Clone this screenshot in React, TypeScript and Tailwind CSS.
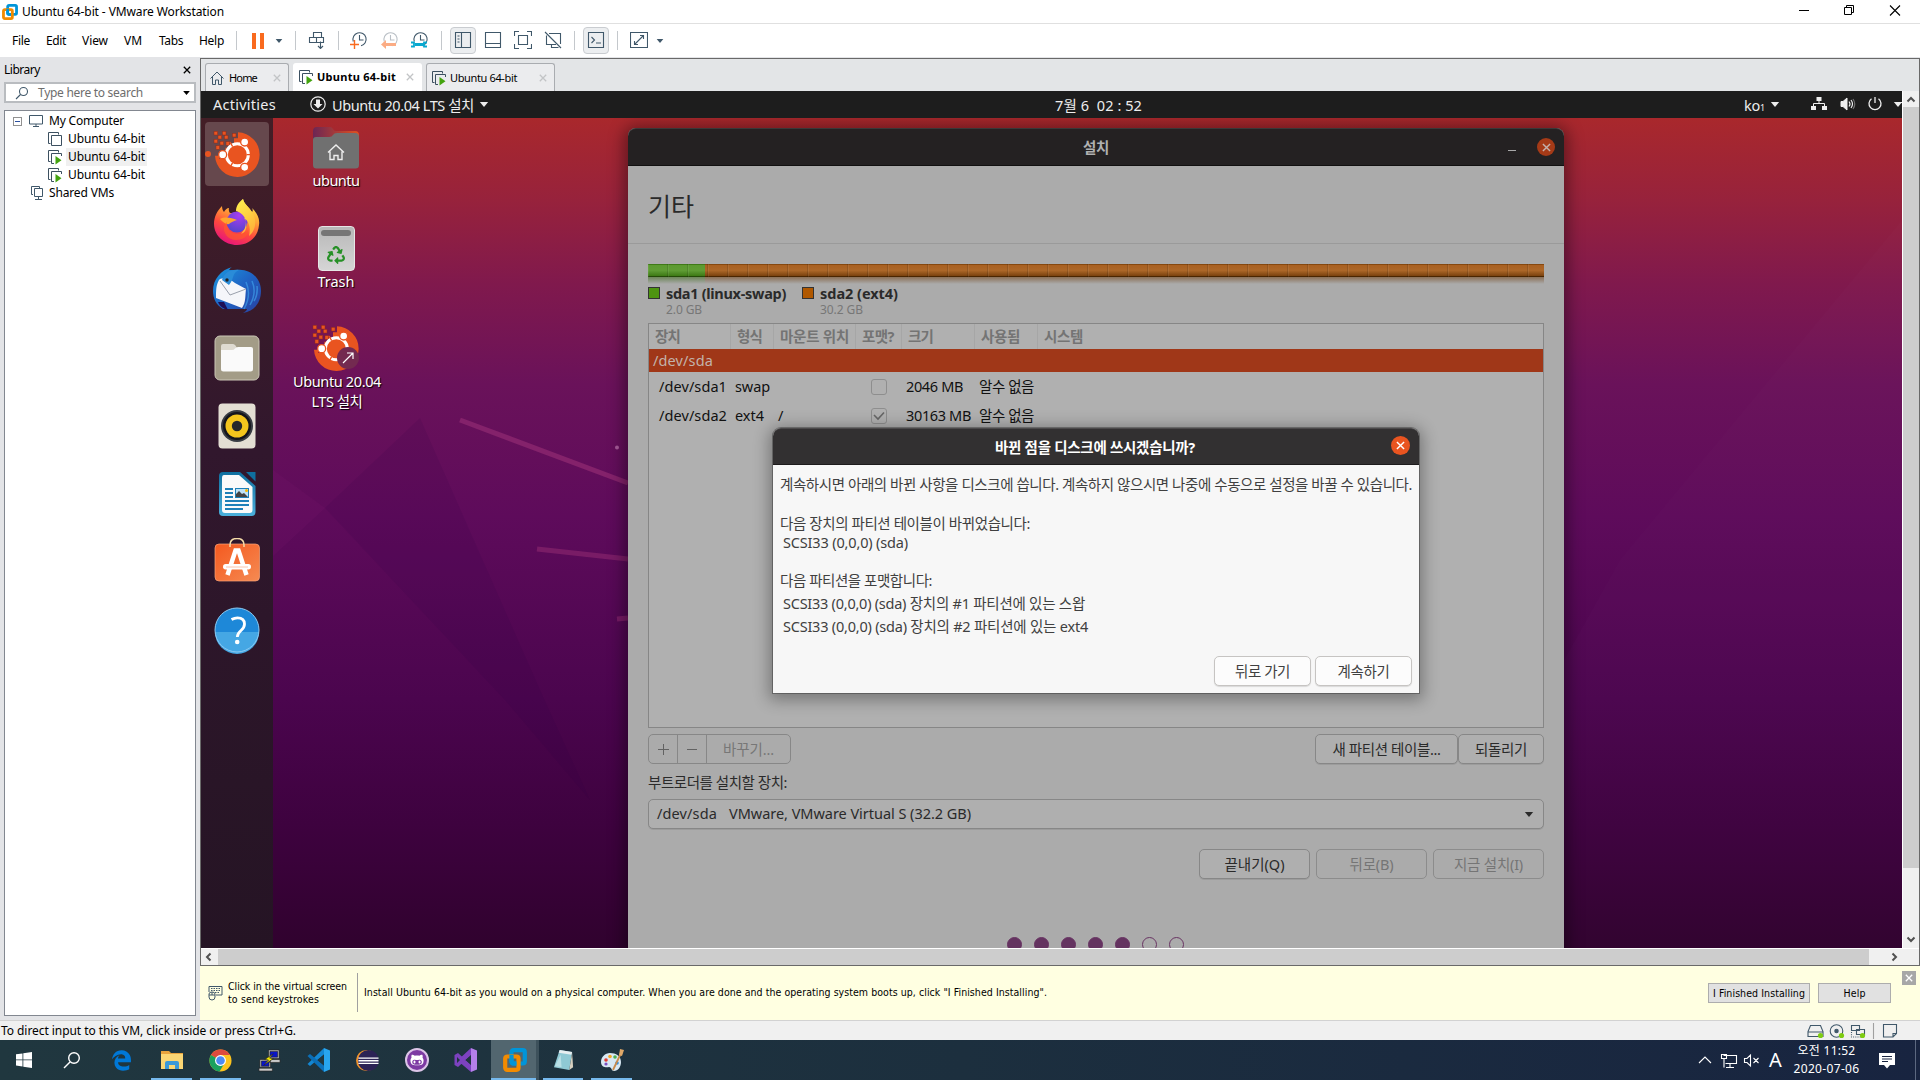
import React, { useLayoutEffect, useRef } from "react";
import { FaRecycle } from "react-icons/fa";
import { FaEdgeLegacy, FaGithubAlt } from "react-icons/fa6";

const UI = "font-['Noto_Sans','Noto_Sans_CJK_KR',sans-serif]";

/* A single line of text, tracked so that it fills the given width. */
function T({ w, className = "", children }: { w: number; className?: string; children: string }) {
  const ref = useRef<HTMLSpanElement>(null);
  useLayoutEffect(() => {
    const el = ref.current;
    if (!el) return;
    el.style.letterSpacing = "0px";
    const natural = el.getBoundingClientRect().width;
    el.style.letterSpacing = `${(w - natural) / children.length}px`;
  }, [w, children]);
  return (
    <span ref={ref} className={`inline-block shrink-0 whitespace-pre ${className}`}>
      {children}
    </span>
  );
}

type IconProps = { className?: string };

function VmwareLogo({ className }: IconProps) {
  return (
    <svg viewBox="0 0 24 24" className={className} fill="none" strokeWidth="4.200">
      <rect x="8.500" y="2.200" width="13.300" height="13.300" rx="2" stroke="#0095d9" />
      <rect x="2.200" y="8.500" width="13.300" height="13.300" rx="2" stroke="#f38b00" />
      <path d="M8.500 7v6.500q0 2 2 2h3" stroke="#0095d9" />
    </svg>
  );
}

function UbuntuInstaller({ className }: IconProps) {
  const bits = [[6, 7], [31, 7], [18, 19], [61, 13], [37, 19], [6, 31], [24, 37], [42, 38], [12, 50]];
  return (
    <svg viewBox="0 0 150 150" className={className}>
      <path d="M78 10A67 67 0 1 1 9 80H22V90H30V74H28V68H40V56H54V44H66V28H78Z" fill="#e95420" />
      {bits.map(([x, y]) => (
        <rect key={`${x}-${y}`} x={x} y={y} width="11" height="11" fill="#e95420" stroke="#8f2a1a" strokeWidth="1.500" />
      ))}
      <circle cx="76" cy="77" r="33" fill="none" stroke="#fff" strokeWidth="9" />
      <path d="M104 77H119M62 53L54 39M62 101L54 115" stroke="#e95420" strokeWidth="4" />
      <g fill="#fff" stroke="#e95420" strokeWidth="4">
        <circle cx="32" cy="77" r="12" />
        <circle cx="98" cy="39" r="12" />
        <circle cx="98" cy="115" r="12" />
      </g>
    </svg>
  );
}

function Firefox({ className }: IconProps) {
  return (
    <svg viewBox="0 0 48 48" className={className}>
      <defs>
        <linearGradient id="ffa" x1="0.75" y1="0" x2="0.3" y2="1">
          <stop offset="0" stopColor="#fff44f" />
          <stop offset=".35" stopColor="#ffa436" />
          <stop offset=".65" stopColor="#ff4a3d" />
          <stop offset="1" stopColor="#e5127d" />
        </linearGradient>
        <radialGradient id="ffb" cx=".6" cy=".2" r=".9">
          <stop offset="0" stopColor="#a83df0" />
          <stop offset="1" stopColor="#4a46c8" />
        </radialGradient>
        <linearGradient id="ffc" x1="0" y1="0" x2="0.4" y2="1">
          <stop offset="0" stopColor="#fff44f" />
          <stop offset="1" stopColor="#ffb43a" />
        </linearGradient>
      </defs>
      <path d="M9 8c0 3 1 5 2 6 1-2 3-4 5-4-.5 2 0 4 1 5h8c0-6 2-11 5-14 1 5 6 8 9 13 1-1 1-2 0-4 5 5 8 10 7 17-1 12-10 20-22 20S1 38 1 26C1 19 4 13 9 8z" fill="url(#ffa)" />
      <circle cx="24" cy="24" r="10.500" fill="url(#ffb)" />
      <path d="M7 21c5-3 12-1 17 1-3 1-6 2-8 4-3 1-6-2-9-5z" fill="#ffa52e" />
      <path d="M23 13c0-5 3-9 7-12 1 5 6 8 9 13 6 9 3 19-3 24 2-8 0-15-5-18 4 6 3 14-3 16 8-8 6-20-5-23z" fill="url(#ffc)" />
      <path d="M14 24c-1 7 4 12 11 12 4 0 8-1 10-4 1 6-5 10-12 10-8 0-13-7-12-14z" fill="#ff5a2b" opacity=".65" />
    </svg>
  );
}

function Thunderbird({ className }: IconProps) {
  return (
    <svg viewBox="0 0 48 48" className={className}>
      <defs>
        <linearGradient id="tb" x1="0" y1="0" x2="1" y2="1">
          <stop offset="0" stopColor="#1b9be0" />
          <stop offset=".5" stopColor="#1f63c4" />
          <stop offset="1" stopColor="#2a3fa0" />
        </linearGradient>
      </defs>
      <path d="M19 1c-2 1-2 2-3 3h7c14-2 25 8 25 21 0 11-6 20-18 22 3-2 4-3 4-4H10C3 39 0 32 0 25 0 13 8 4 19 1z" fill="url(#tb)" />
      <path d="M5 36c2 5 6 7 10 8l-4-8z" fill="#1d0f56" />
      <path d="M6 14l1-1c4-2 10 0 15 4l11 6c-1 8 0 13-4 19L3 32c0-7 0-13 3-18z" fill="#f5f6fa" />
      <path d="M7 15L17 29 33 23" fill="none" stroke="#9aa0ac" strokeWidth="1" />
      <path d="M9 14C11 7 17 3 26 4 18 8 22 12 16 19z" fill="#2a8cd8" />
      <path d="M33 16c4 9 3 18-2 27M39 15c4 9 2 17-2 24M44 20q1 9-3 15" stroke="#3d9de8" strokeWidth="1.500" fill="none" opacity=".7" />
      <circle cx="14" cy="14" r="1.700" fill="#222" />
    </svg>
  );
}

function FilesIcon({ className }: IconProps) {
  return (
    <svg viewBox="0 0 48 48" className={className}>
      <rect x="2" y="2" width="44" height="44" rx="5" fill="#a39c87" stroke="#cbc6b6" strokeWidth="1" />
      <path d="M8 17V12q0-2 2-2h10q1.500 0 2.500 1.500L24 14h14q2 0 2 2v4z" fill="#dedad0" />
      <path d="M8 16h11q2 0 3-1.500t3-1.500h13q2 0 2 2v20q0 2.500-2.500 2.500h-27Q8 37.500 8 35z" fill="#fafafa" />
    </svg>
  );
}

function RhythmboxIcon({ className }: IconProps) {
  return (
    <svg viewBox="0 0 48 48" className={className}>
      <rect x="5.500" y="1.500" width="37" height="45" rx="4" fill="#e3ded3" />
      <circle cx="24" cy="24" r="16" fill="#383c43" />
      <circle cx="24" cy="24" r="14" fill="#14151c" />
      <circle cx="24" cy="24" r="11.500" fill="#f3c51d" />
      <circle cx="24" cy="24" r="5.200" fill="#23262a" />
    </svg>
  );
}

function WriterIcon({ className }: IconProps) {
  return (
    <svg viewBox="0 0 48 48" className={className}>
      <defs>
        <linearGradient id="wr" x1="0" y1="0" x2="0" y2="1">
          <stop offset="0" stopColor="#0f6f9f" />
          <stop offset="1" stopColor="#4bb0dc" />
        </linearGradient>
      </defs>
      <path d="M10 2h17l15.500 14v26q0 4-4 4H10q-4 0-4-4V6q0-4 4-4z" fill="url(#wr)" />
      <path d="M33 2h9.500v9.500z" fill="#0f6f9f" />
      <path d="M11 5h15l13.500 12v23q0 3-3 3h-24.500q-3 0-3-3V8q0-3 2-3z" fill="#fafafa" />
      <path d="M12 19h8M12 23h8M12 27h8M12 31h24M12 35h24M12 39h18" stroke="#1e80b8" strokeWidth="2" />
      <rect x="22" y="18" width="14" height="10" fill="#1e80b8" />
      <rect x="23" y="19" width="12" height="8" fill="#bfe3f7" />
      <path d="M23 27v-3l3-3 3 3 2-1 4 4z" fill="#444" />
      <circle cx="33.500" cy="20.500" r="1.500" fill="#fbb800" />
    </svg>
  );
}

function SoftwareIcon({ className }: IconProps) {
  return (
    <svg viewBox="0 2 48 48" className={className}>
      <defs>
        <linearGradient id="sw" x1="0" y1="0" x2="1" y2="1">
          <stop offset="0" stopColor="#f4591f" />
          <stop offset="1" stopColor="#f58a52" />
        </linearGradient>
      </defs>
      <rect x="2" y="8" width="44.500" height="37" rx="4" fill="url(#sw)" stroke="#f9a37a" strokeWidth=".7" />
      <path d="M17 11V9q0-6.500 7-6.500T31 9v2" fill="none" stroke="#f5dca8" strokeWidth="1.500" />
      <path d="M14.500 39L22.500 14.500h3L33.500 39" fill="none" stroke="#fff" strokeWidth="4.500" />
      <rect x="10" y="28" width="28" height="5.500" rx="2.700" fill="#fff" />
      <path d="M13 31h22" stroke="#f9b79b" strokeWidth=".8" />
    </svg>
  );
}

function HelpIcon({ className }: IconProps) {
  return (
    <svg viewBox="0 0 48 48" className={className}>
      <circle cx="24" cy="24" r="22" fill="#1e88d8" />
      <path d="M2 26a22 22 0 0 0 44 0z" fill="#45a7e4" />
      <circle cx="24" cy="24" r="22" fill="none" stroke="#8ccaf2" strokeWidth="1" />
      <path d="M18.500 13.500q3-1.700 6-1.700 7 0 7 6.200 0 3.500-3.500 6.500T24.300 31" fill="none" stroke="#fff" strokeWidth="2.800" />
      <circle cx="24.200" cy="36" r="2.300" fill="#fff" />
    </svg>
  );
}

function VmIcon({ running }: { running?: boolean }) {
  return (
    <svg viewBox="0 0 16 16" className="h-4 w-4 shrink-0" fill="none" stroke="#3c5060">
      <path d="M3.500 12.500h-2v-11h10v2" />
      <path d={running ? "M7 14.500H4.500v-10h10V7" : "M4.500 4.500h10v10h-10z"} />
      {running && <path d="M8.500 7v8.500l6-4.200z" fill="#43a30f" stroke="none" />}
    </svg>
  );
}

function Cross({ className }: IconProps) {
  return (
    <svg viewBox="0 0 10 10" className={className} stroke="currentColor" strokeWidth="1.600">
      <path d="M1 1l8 8M9 1l-8 8" />
    </svg>
  );
}

function Caret({ className }: IconProps) {
  return (
    <svg viewBox="0 0 10 6" className={className} fill="currentColor">
      <path d="M0 0h10L5 6z" />
    </svg>
  );
}

/* ---------- VMware window chrome ---------- */

function TitleBar() {
  return (
    <div className="flex h-6 shrink-0 items-center border-b border-[#e0e0e0] bg-white pl-0.5">
      <VmwareLogo className="h-4 w-4" />
      <T w={202} className="ml-1 text-[12px] leading-5 text-black">Ubuntu 64-bit - VMware Workstation</T>
      <svg viewBox="0 0 120 16" className="mr-3.5 ml-auto h-4 w-[120px] -translate-y-0.5" fill="none" stroke="#000">
        <path d="M13 8.500h10" />
        <path d="M58.500 5.500h7v7h-7zM60.500 5.500V3.500h7v7H66" />
        <path d="M104 3.500l10 10M114 3.500l-10 10" strokeWidth="1.100" />
      </svg>
    </div>
  );
}

function Sep() {
  return <div className="h-[19px] w-px shrink-0 bg-[#c4c8cc]" />;
}

function ToolIcon({ children, active }: { children: React.ReactNode; active?: boolean }) {
  return (
    <div className={`flex h-[27px] w-[26px] shrink-0 items-start justify-center rounded-[4px] border pt-[3px] ${active ? "border-[#c9ccd0] bg-[#eceef0]" : "border-transparent"}`}>
      <svg viewBox="0 0 18 18" className="h-[18px] w-[18px] shrink-0" fill="none" stroke="#40586a" strokeWidth="1.100">
        {children}
      </svg>
    </div>
  );
}

function Clock({ faded }: { faded?: boolean }) {
  return (
    <g stroke={faded ? "#b9bfc5" : "#40586a"}>
      <path d="M3.300 10.500A6.600 6.600 0 1 1 11 14.800" />
      <path d="M9.500 4v5h4" />
    </g>
  );
}

function MenuBar() {
  const menus: [string, number, string][] = [
    ["File", 18, "mr-4"], ["Edit", 20, "mr-4"], ["View", 26, "mr-4"],
    ["VM", 18, "mr-[17px]"], ["Tabs", 24, "mr-4"], ["Help", 25, "mr-3"],
  ];
  return (
    <div className="flex h-[33px] shrink-0 items-center bg-white pl-3 text-black">
      {menus.map(([label, w, gap]) => (
        <T key={label} w={w} className={`text-[12px] leading-5 ${gap}`}>{label}</T>
      ))}
      <div className="flex items-center">
        <Sep />
        <div className="ml-[15px] flex gap-1">
          <div className="h-4 w-1 bg-[#f96a1e]" />
          <div className="h-4 w-1 bg-[#f96a1e]" />
        </div>
        <Caret className="mr-3 ml-[11px] h-1 w-2 text-[#40586a]" />
        <Sep />
        <div className="mx-2">
          <ToolIcon>
            <path d="M5.500 1.500h8v5h-8zM1.500 6.500h7v5h-7zM8.500 6.500h7v5h-7zM12.500 10.500v7M10 15l2.500 2.500L15 15" />
          </ToolIcon>
        </div>
        <Sep />
        <div className="mr-2 ml-[7px] flex gap-1">
          <ToolIcon>
            <Clock />
            <path d="M0 13.500h9M4.500 9v9" stroke="#f96a1e" strokeWidth="1.400" />
          </ToolIcon>
          <div className="ml-px">
            <ToolIcon>
              <Clock faded />
              <path d="M4 13.500h11" stroke="#fbac84" strokeWidth="3" />
              <path d="M0 13.500l5-4.500v9z" fill="#fbac84" stroke="none" />
            </ToolIcon>
          </div>
          <ToolIcon>
            <Clock />
            <path d="M4 13.500h9" stroke="#09a8cf" strokeWidth="3" />
            <path d="M0 11.500h3v4H0M16 11.500h-3v4h3" stroke="#09a8cf" strokeWidth="1.800" />
          </ToolIcon>
        </div>
        <Sep />
        <div className="mx-2 flex gap-1">
          <ToolIcon active><path d="M1.500 1.500h15v15h-15zM7.500 2v14M3.500 5h2M3.500 8h2M3.500 11h2" /></ToolIcon>
          <ToolIcon><path d="M1.500 1.500h15v15h-15zM2 12.500h14" /></ToolIcon>
          <ToolIcon><path d="M.5 5V.5h4.500M13 .5h4.500V5M17.500 13v4.500H13M5 17.500H.5V13M4.500 4.500h9v9h-9z" /></ToolIcon>
          <ToolIcon><path d="M1 1l16 16M5 2.500h11.500V13M2.500 4.500v9H12M7.500 13v3.500h7" /></ToolIcon>
        </div>
        <Sep />
        <div className="mx-2">
          <ToolIcon active><path d="M1.500 1.500h15v15h-15zM4.500 6L7.500 9l-3 3M9 12h5" /></ToolIcon>
        </div>
        <Sep />
        <div className="ml-2">
          <ToolIcon><path d="M.5 1.500h17v15H.5zM4.500 13.500l9-9M10 4.500h3.500V8M4.500 10v3.500H8" /></ToolIcon>
        </div>
        <Caret className="ml-1 h-1 w-2 text-[#40586a]" />
      </div>
    </div>
  );
}

function Library() {
  return (
    <div className="flex w-[200px] shrink-0 flex-col bg-[#e3e4e7] pr-1 pl-1 text-black">
      <div className="flex h-[25px] items-center justify-between pr-[5px]">
        <T w={36} className="text-[12px] leading-5">Library</T>
        <Cross className="h-2 w-2" />
      </div>
      <div className="flex h-[21px] w-48 items-center border-2 border-[#b9bcc0] bg-white pr-1">
        <svg viewBox="0 0 14 14" className="ml-[9px] h-3.5 w-3.5" fill="none" stroke="#40586a" strokeWidth="1.100">
          <circle cx="8.500" cy="5.500" r="4" />
          <path d="M5.500 8.500L1 13" />
        </svg>
        <T w={105} className="ml-[9px] text-[12px] leading-4 text-[#6d6d6d]">Type here to search</T>
        <Caret className="ml-auto h-1 w-[7px]" />
      </div>
      <div className="mt-[7px] mb-1 w-48 flex-1 border border-[#828790] bg-white pt-px">
        <div className="flex h-[18px] items-center pl-2">
          <div className="flex h-[9px] w-[9px] items-center justify-center border border-[#919191] bg-white">
            <div className="h-px w-[5px] bg-[#2c50a0]" />
          </div>
          <svg viewBox="0 0 15 14" className="ml-[7px] h-3.5 w-[15px]" fill="none" stroke="#40586a">
            <path d="M.5 1.500h13v8.500H.5zM7 10v2.500M4 12.500h6" />
          </svg>
          <T w={75} className="ml-[5px] text-[12px] leading-[18px]">My Computer</T>
        </div>
        {[0, 1, 2].map((i) => (
          <div key={i} className="flex h-[18px] items-center pl-[42px]">
            <VmIcon running={i > 0} />
            <div className={`ml-[3px] flex h-[18px] items-center pr-0.5 pl-0.5 ${i === 1 ? "bg-[#f0f0f0]" : ""}`}>
              <T w={77} className="text-[12px] leading-[18px]">Ubuntu 64-bit</T>
            </div>
          </div>
        ))}
        <div className="flex h-[18px] items-center pl-[25px]">
          <svg viewBox="0 0 14 14" className="h-3.5 w-3.5" fill="none" stroke="#40586a">
            <path d="M3 8.500H1.500v-8h8V2M4.500 2.500h8v8h-8zM8.500 11v2.500M5 13.500h7" />
          </svg>
          <T w={65} className="ml-[5px] text-[12px] leading-[18px]">Shared VMs</T>
        </div>
      </div>
    </div>
  );
}

function TabStrip() {
  return (
    <div className="flex h-8 shrink-0 items-end bg-[#e3e5e7] pl-1 text-black">
      <div className="flex h-7 w-[84px] items-center rounded-t-[3px] border border-b-0 border-[#a9acb0] bg-[#ebecee] pl-1">
        <svg viewBox="0 0 14 14" className="h-3.5 w-3.5" fill="none" stroke="#40586a">
          <path d="M.5 7.500L7 1l6.500 6.500M2.500 6v7.500h3V9h3v4.500h3V6" />
        </svg>
        <T w={28} className="ml-[5px] text-[11px] leading-4">Home</T>
        <Cross className="ml-4 h-2 w-2 text-[#c2c4c6]" />
      </div>
      <div className="ml-1 flex h-7 w-[129px] items-center rounded-t-[3px] bg-white pl-[5px]">
        <VmIcon running />
        <T w={79} className="ml-[3px] text-[11px] leading-4 font-bold">Ubuntu 64-bit</T>
        <Cross className="ml-[10px] h-2 w-2 text-[#c2c4c6]" />
      </div>
      <div className="ml-1 flex h-7 w-[129px] items-center rounded-t-[3px] border border-b-0 border-[#a9acb0] bg-[#ebecee] pl-1">
        <VmIcon running />
        <T w={67} className="ml-[3px] text-[11px] leading-4">Ubuntu 64-bit</T>
        <Cross className="ml-[22px] h-2 w-2 text-[#c2c4c6]" />
      </div>
    </div>
  );
}

/* ---------- Guest desktop ---------- */

function GuestTopBar() {
  return (
    <div className="relative flex h-[27px] shrink-0 items-center bg-[#1d1d1d] pl-3 text-[14.5px] leading-5 text-[#eeeeee]">
      <T w={63} className="-translate-y-px">Activities</T>
      <svg viewBox="0 0 16 16" className="ml-[34px] h-4 w-4 -translate-y-px">
        <circle cx="8" cy="8" r="7.200" fill="none" stroke="#eee" strokeWidth="1.200" />
        <path d="M6 3.500h4V8h2.500L8 12.500 3.500 8H6z" fill="#eee" />
      </svg>
      <T w={142} className="ml-1.5">Ubuntu 20.04 LTS 설치</T>
      <Caret className="ml-[5px] h-[5px] w-[10px]" />
      <div className="absolute top-1 left-[854px]">
        <T w={87}>7월 6  02 : 52</T>
      </div>
      <div className="ml-auto flex h-5 w-[158px] items-center overflow-hidden">
        <T w={16}>ko</T>
        <span className="w-[5px] translate-y-[3px] text-[9px] leading-3">1</span>
        <Caret className="ml-[5px] h-[5px] w-[10px] shrink-0" />
        <svg viewBox="0 0 16 16" className="ml-[31px] h-4 w-4 shrink-0 -translate-y-px" fill="#eee">
          <path d="M5.500 1h5v4h-5zM0 10h5v4H0zM11 10h5v4h-5z" />
          <path d="M8 5v3M2.500 10V7.500h11V10" stroke="#eee" fill="none" />
        </svg>
        <svg viewBox="0 0 16 16" className="ml-[13px] h-4 w-4 shrink-0 -translate-y-px" fill="none" stroke="#eee">
          <path d="M1 5.500h2L7 2v12l-4-3.500H1z" fill="#eee" />
          <path d="M9 5.500q2 2.500 0 5M11 4q3 4 0 8" strokeWidth="1.200" />
          <path d="M13 3q3.500 5 0 10" strokeWidth="1.200" opacity=".4" />
        </svg>
        <svg viewBox="0 0 16 16" className="ml-[11px] h-4 w-4 shrink-0 -translate-y-px" fill="none" stroke="#eee" strokeWidth="1.300">
          <path d="M8 1v6M4.500 2.800a6 6 0 1 0 7 0" />
        </svg>
        <Caret className="ml-[10px] h-[5px] w-[10px] shrink-0" />
      </div>
    </div>
  );
}

function Wallpaper() {
  return (
    <svg viewBox="201 118 1701 830" className="absolute inset-0 h-full w-full">
      <defs>
        <linearGradient id="wp" x1="0" y1="118" x2="0" y2="948" gradientUnits="userSpaceOnUse">
          <stop offset="0" stopColor="#a9282c" />
          <stop offset=".1" stopColor="#97223c" />
          <stop offset=".2" stopColor="#80194d" />
          <stop offset=".32" stopColor="#6a125a" />
          <stop offset=".48" stopColor="#5e0b5b" />
          <stop offset=".7" stopColor="#4b054e" />
          <stop offset=".85" stopColor="#3e023f" />
          <stop offset="1" stopColor="#30022e" />
        </linearGradient>
      </defs>
      <rect x="201" y="118" width="1701" height="830" fill="url(#wp)" />
      <path d="M420 418L325 508 505 700 590 800 540 690z" fill="#2c0040" opacity=".1" />
      <path d="M273 470L325 508 273 556z" fill="#ff60c0" opacity=".03" />
      <path d="M1902 220L1620 560 1564 660V950H1902z" fill="#fff" opacity=".012" />
      <g stroke="#84226b" strokeWidth="5">
        <path d="M460 420L628 483" />
        <path d="M537 549L628 559" opacity=".75" />
        <path d="M617 619L628 618" opacity=".75" />
      </g>
      <circle cx="617" cy="447.500" r="2" fill="#a65a98" />
    </svg>
  );
}

function Dock() {
  const icons = [Firefox, Thunderbird, FilesIcon, RhythmboxIcon, WriterIcon, SoftwareIcon, HelpIcon];
  return (
    <div className="absolute top-0 bottom-0 left-0 flex w-[72px] flex-col items-center bg-linear-to-b from-[#431e26] via-[#31172d] via-40% to-[#251424] pt-1">
      <div className="relative mb-0.5 flex h-16 w-16 shrink-0 items-center justify-center rounded-[4px] bg-[#66484d]">
        <div className="absolute left-0 h-1.5 w-1.5 rounded-full bg-[#e95420]" />
        <UbuntuInstaller className="h-[50px] w-[50px]" />
      </div>
      {icons.map((Icon, i) => (
        <div key={i} className="flex h-[68px] w-16 shrink-0 items-center justify-center">
          <Icon className="h-12 w-12" />
        </div>
      ))}
    </div>
  );
}

function DesktopLabel({ w, children }: { w: number; children: string }) {
  return <T w={w} className="text-[14.5px] leading-5 text-white [text-shadow:1px_1px_1px_#000]">{children}</T>;
}

function DesktopIcons() {
  return (
    <>
      <div className="absolute top-[8px] left-[75px] flex w-[120px] flex-col items-center">
        <svg viewBox="0 0 48 44" className="h-11 w-12">
          <defs>
            <linearGradient id="fb"><stop offset="0" stopColor="#6c2654" /><stop offset="1" stopColor="#e0501f" /></linearGradient>
          </defs>
          <path d="M1 12V5q0-4 4-4h13q2 0 3 2t3 2h19q4 0 4 4v8H1z" fill="url(#fb)" />
          <path d="M1 14q0-3 3-3h13q3 0 4-2t4-2h18q4 0 4 4v28q0 3.500-3.500 3.500h-39Q1 42.500 1 39z" fill="#707070" />
          <path d="M16 26.500L24 19l8 7.500M18 25.500v8h4v-4h4v4h4v-8" fill="none" stroke="#eee" strokeWidth="1.400" />
        </svg>
        <div className="-mt-0.5"><DesktopLabel w={47}>ubuntu</DesktopLabel></div>
      </div>
      <div className="absolute top-[108px] left-[75px] flex w-[120px] flex-col items-center">
        <div className="flex h-[45px] w-[37px] flex-col items-center rounded-[4px] border border-[#e6e6e6] bg-linear-to-b from-[#b8b8b8] to-[#d5d5d5] pt-[3px]">
          <div className="h-1.5 w-[30px] rounded-[3px] bg-[#767676]" />
          <FaRecycle className="mt-2.5 h-[18px] w-[18px] text-[#269026]" />
        </div>
        <div className="-mt-0.5"><DesktopLabel w={37}>Trash</DesktopLabel></div>
      </div>
      <div className="absolute top-[205px] left-[75px] flex w-[120px] flex-col items-center">
        <div className="relative">
          <UbuntuInstaller className="h-[50px] w-[50px]" />
          <svg viewBox="0 0 22 22" className="absolute right-0.5 bottom-1 h-[22px] w-[22px]">
            <circle cx="11" cy="11" r="11" fill="#732a50" />
            <path d="M6 16L16 6M10 6h6v6" fill="none" stroke="#fff" strokeWidth="1.200" />
          </svg>
        </div>
        <div className="-mt-0.5 ml-0.5 flex flex-col items-center">
          <DesktopLabel w={88}>Ubuntu 20.04</DesktopLabel>
          <DesktopLabel w={51}>LTS 설치</DesktopLabel>
        </div>
      </div>
    </>
  );
}

function GtkButton({ w, tw, label, className = "" }: { w: string; tw: number; label: string; className?: string }) {
  return (
    <div className={`flex h-[30px] items-center justify-center rounded-[5px] border text-[14.5px] ${w} ${className}`}>
      <T w={tw} className="leading-6">{label}</T>
    </div>
  );
}

const COLS: [string, string, number][] = [
  ["장치", "w-[82px] pl-1.5", 25],
  ["형식", "w-[43px] pl-1.5", 25],
  ["마운트 위치", "w-[82px] pl-1.5", 69],
  ["포맷?", "w-[46px] pl-1.5", 32],
  ["크기", "w-[73px] pl-1.5", 25],
  ["사용됨", "w-[63px] pl-1.5", 39],
];

function PartRow({ dev, fs, fsw, mount, checked, size, sizew }: { dev: string; fs: string; fsw: number; mount?: string; checked?: boolean; size: string; sizew: number }) {
  return (
    <div className="flex h-[29px] items-center text-[14.5px] leading-6 text-[#111]">
      <div className="w-[86px] -translate-y-px pl-[10px]"><T w={68}>{dev}</T></div>
      <div className="w-[43px] -translate-y-px"><T w={fsw}>{fs}</T></div>
      <div className="w-[93px] -translate-y-px">{mount && <T w={6}>{mount}</T>}</div>
      <div className="mr-[19px] flex h-4 w-4 items-center justify-center rounded-[3px] border border-[#8e8e8e]">
        {checked && (
          <svg viewBox="0 0 12 12" className="h-3 w-3" fill="none" stroke="#666" strokeWidth="1.600">
            <path d="M1 5l4 4 6-6.500" />
          </svg>
        )}
      </div>
      <div className="w-[73px] -translate-y-px"><T w={sizew}>{size}</T></div>
      <T w={55} className="-translate-y-px">알수 없음</T>
    </div>
  );
}

function InstallerWindow() {
  return (
    <div className="absolute top-[10px] left-[427px] flex h-[900px] w-[936px] flex-col rounded-t-lg bg-[#ababab] text-[#2a2a2a] shadow-[0_2px_16px_4px_rgba(0,0,0,0.4)]">
      <div className="relative flex h-[38px] shrink-0 items-center justify-center rounded-t-lg border-t border-b border-t-[#3a3838] border-b-[#121111] bg-[#242122]">
        <T w={26} className="text-[14.5px] leading-6 font-bold text-[#b0b0b0]">설치</T>
        <div className="absolute right-12 bottom-[14px] h-px w-2 bg-[#a8a8a8]" />
        <div className="absolute top-[9px] right-[9px] flex h-[18px] w-[18px] items-center justify-center rounded-full bg-[#a53a17]">
          <Cross className="h-[9px] w-[9px] text-[#c4b2ac]" />
        </div>
      </div>
      <div className="flex h-[78px] shrink-0 items-center border-b border-[#9a9a9a] pt-0.5 pl-5">
        <T w={46} className="text-[25px] leading-9">기타</T>
      </div>
      <div className="flex flex-1 flex-col px-5">
        <div className="relative mt-5 flex h-[13px] shrink-0">
          <div className="h-full w-[57px] border-t border-b border-t-[#3f7a18] border-b-[#244a08] bg-linear-to-b from-[#5c9a30] via-[#5f9c34] to-[#3d7a14]" />
          <div className="h-full flex-1 border-t border-b border-t-[#86480f] border-b-[#4a2500] bg-linear-to-b from-[#a96021] via-[#ac6728] to-[#7a420e]" />
          <div className="absolute inset-0 bg-[repeating-linear-gradient(90deg,rgba(255,255,255,0.07)_0_1px,transparent_1px_19px,rgba(0,0,0,0.13)_19px_20px)]" />
        </div>
        <div className="flex h-[7px] shrink-0">
          <div className="w-[57px] bg-linear-to-b from-[#6c8558] to-transparent" />
          <div className="flex-1 bg-linear-to-b from-[#8a6f56] to-transparent" />
        </div>
        <div className="mt-[3px] flex h-[36px] shrink-0">
          <div className="h-3 w-3 border border-[#333] bg-[#4e9411]" />
          <div className="ml-1.5 flex w-[136px] flex-col">
            <T w={120} className="-mt-[3px] h-[18px] w-fit text-[14.5px] leading-[18px] font-bold">sda1 (linux-swap)</T>
            <T w={36} className="w-fit text-[12px] leading-4 text-[#777]">2.0 GB</T>
          </div>
          <div className="h-3 w-3 border border-[#333] bg-[#b05800]" />
          <div className="ml-1.5 flex flex-col">
            <T w={78} className="-mt-[3px] h-[18px] w-fit text-[14.5px] leading-[18px] font-bold">sda2 (ext4)</T>
            <T w={43} className="w-fit text-[12px] leading-4 text-[#777]">30.2 GB</T>
          </div>
        </div>
        <div className="h-[405px] shrink-0 border border-[#868686] bg-[#b0b0b0]">
          <div className="flex h-[25px] items-center text-[14.5px] leading-6 font-bold text-[#747474]">
            {COLS.map(([label, cls, w]) => (
              <div key={label} className={`flex h-full items-center border-r border-[#a6a6a6] pb-0.5 ${cls}`}>
                <T w={w}>{label}</T>
              </div>
            ))}
            <T w={39} className="ml-1.5 -translate-y-px">시스템</T>
          </div>
          <div className="flex h-[23px] items-center bg-[#a03718] pb-0.5 pl-1 text-[14.5px] leading-6 text-[#c3b3ab]">
            <T w={60}>/dev/sda</T>
          </div>
          <PartRow dev="/dev/sda1" fs="swap" fsw={35} size="2046 MB" sizew={57} />
          <PartRow dev="/dev/sda2" fs="ext4" fsw={29} mount="/" checked size="30163 MB" sizew={65} />
        </div>
        <div className="mt-1.5 flex shrink-0">
          <div className="flex h-[30px] w-[143px] items-center rounded-[5px] border border-[#878787] text-[#777]">
            <svg viewBox="0 0 58 28" className="h-7 w-[58px]" fill="none" stroke="#626262">
              <path d="M9 14.500h11M14.500 9v11M38 14.500h10" />
              <path d="M28.500 0v28M57.500 0v28" stroke="#878787" />
            </svg>
            <T w={51} className="ml-4 text-[14.5px] leading-6">바꾸기...</T>
          </div>
          <GtkButton w="w-[143px] ml-auto" tw={108} label="새 파티션 테이블..." className="border-[#878787] bg-[#afafaf] shadow-[0_1px_0_#9c9c9c]" />
          <GtkButton w="w-[86px]" tw={52} label="되돌리기" className="border-[#878787] bg-[#afafaf] shadow-[0_1px_0_#9c9c9c]" />
        </div>
        <div className="mt-1.5 flex h-[29px] shrink-0 items-start">
          <T w={139} className="text-[14.5px] leading-6">부트로더를 설치할 장치:</T>
        </div>
        <div className="flex h-[30px] shrink-0 items-center rounded-[5px] border border-[#878787] bg-[#afafaf] pr-[9px] pl-2 text-[14.5px] leading-6 shadow-[0_1px_0_#9c9c9c]">
          <T w={60} className="-translate-y-px">/dev/sda</T>
          <T w={242} className="ml-[12px] -translate-y-px">VMware, VMware Virtual S (32.2 GB)</T>
          <Caret className="ml-auto h-[5px] w-[10px]" />
        </div>
        <div className="mt-5 flex shrink-0 justify-end gap-1.5">
          <GtkButton w="w-[111px]" tw={60} label="끝내기(Q)" className="border-[#878787] bg-[#afafaf] shadow-[0_1px_0_#9c9c9c]" />
          <GtkButton w="w-[111px]" tw={44} label="뒤로(B)" className="border-[#8c8c8c] text-[#757575]" />
          <GtkButton w="w-[111px]" tw={69} label="지금 설치(I)" className="border-[#8c8c8c] text-[#757575]" />
        </div>
        <div className="mt-[58px] mr-0.5 flex shrink-0 justify-center gap-3">
          {[1, 1, 1, 1, 1, 0, 0].map((on, i) => (
            <div key={i} className={`h-[15px] w-[15px] rounded-full border border-[#693463] ${on ? "bg-[#643360]" : ""}`} />
          ))}
        </div>
      </div>
    </div>
  );
}

function ConfirmDialog() {
  return (
    <div className="absolute top-[310px] left-[572px] flex h-[265px] w-[646px] flex-col rounded-t-lg bg-[#f7f7f7] text-[14.5px] text-[#404040] shadow-[0_0_0_1px_rgba(60,60,60,0.5),0_3px_16px_4px_rgba(0,0,0,0.32)]">
      <div className="relative flex h-[37px] shrink-0 items-center justify-center rounded-t-lg border-t border-b border-t-[#4b494a] border-b-[#1d1b1c] bg-[#323031] pr-0.5">
        <T w={200} className="leading-6 font-bold text-white">바뀐 점을 디스크에 쓰시겠습니까?</T>
        <div className="absolute top-[7px] right-[9px] flex h-[19px] w-[19px] items-center justify-center rounded-full bg-[#e95420]">
          <Cross className="h-[9px] w-[9px] text-white" />
        </div>
      </div>
      <div className="flex flex-1 flex-col items-start pl-[7px] leading-5">
        <T w={632} className="mt-[9px]">계속하시면 아래의 바뀐 사항을 디스크에 씁니다. 계속하지 않으시면 나중에 수동으로 설정을 바꿀 수 있습니다.</T>
        <T w={250} className="mt-[19px]">다음 장치의 파티션 테이블이 바뀌었습니다:</T>
        <T w={125} className="-mt-px ml-[3px]">SCSI33 (0,0,0) (sda)</T>
        <T w={152} className="mt-[18px]">다음 파티션을 포맷합니다:</T>
        <T w={302} className="mt-[3px] ml-[3px]">SCSI33 (0,0,0) (sda) 장치의 #1 파티션에 있는 스왑</T>
        <T w={305} className="mt-[3px] ml-[3px]">SCSI33 (0,0,0) (sda) 장치의 #2 파티션에 있는 ext4</T>
      </div>
      <div className="mb-[7px] flex justify-end gap-1 pr-[7px]">
        <GtkButton w="w-[97px]" tw={55} label="뒤로 가기" className="border-[#c6c4c2] bg-[#fcfcfc] shadow-[0_1px_1px_rgba(0,0,0,0.12)]" />
        <GtkButton w="w-[97px]" tw={52} label="계속하기" className="border-[#c6c4c2] bg-[#fcfcfc] shadow-[0_1px_1px_rgba(0,0,0,0.12)]" />
      </div>
    </div>
  );
}

function GuestScreen() {
  return (
    <div className="flex h-[857px] w-[1701px] shrink-0 flex-col overflow-hidden">
      <GuestTopBar />
      <div className="relative flex-1 overflow-hidden">
        <Wallpaper />
        <Dock />
        <DesktopIcons />
        <InstallerWindow />
        <ConfirmDialog />
      </div>
    </div>
  );
}

function Chevron({ d }: { d: string }) {
  return (
    <svg viewBox="0 0 16 16" className="h-4 w-4 shrink-0 bg-[#f0f0f0]" fill="none" stroke="#505050" strokeWidth="2">
      <path d={d} />
    </svg>
  );
}

function InstallHint() {
  return (
    <div className="flex h-[54px] shrink-0 items-start bg-[#ffffe1] pl-2 font-['DejaVu_Sans_Condensed','DejaVu_Sans',sans-serif] text-[10.5px] leading-[13px] text-black [font-stretch:condensed]">
      <svg viewBox="0 0 15 16" className="mt-[19px] h-4 w-[15px]" fill="none" stroke="#40586a">
        <path d="M1 7V1.500h13V10H8" />
        <path d="M3 3.500h9M3 5.500h9M7 7.500h5" strokeDasharray="1.500 1" />
        <path d="M1 9q0-2 3-2t3 2v3q0 3-3 3t-3-3zM1 10h6M4 7v3" />
      </svg>
      <div className="mt-[14px] ml-[5px] flex flex-col items-start">
        <T w={119}>Click in the virtual screen</T>
        <T w={91}>to send keystrokes</T>
      </div>
      <div className="mt-[7px] ml-[10px] h-[39px] w-px bg-[#a0a0a0]" />
      <T w={683} className="mt-5 ml-1.5">Install Ubuntu 64-bit as you would on a physical computer. When you are done and the operating system boots up, click "I Finished Installing".</T>
      <div className="mt-[17px] ml-auto flex h-5 w-[102px] items-center justify-center border border-[#adadad] bg-[#e1e1e1]">
        <T w={92}>I Finished Installing</T>
      </div>
      <div className="mt-[17px] ml-[8px] flex h-5 w-[73px] items-center justify-center border border-[#adadad] bg-[#e1e1e1]">
        <T w={22}>Help</T>
      </div>
      <div className="mt-[5px] mr-1 ml-[11px] flex h-3.5 w-3.5 items-center justify-center bg-[#a7a7a7]">
        <Cross className="h-2 w-2 text-white" />
      </div>
    </div>
  );
}

function StatusBar() {
  return (
    <div className="flex h-5 shrink-0 items-center border-t border-[#d2d2d2] bg-[#f0f0f0] text-black">
      <T w={295} className="ml-px text-[12px] leading-[18px]">To direct input to this VM, click inside or press Ctrl+G.</T>
      <svg viewBox="0 0 92 16" className="mr-[21px] ml-auto h-4 w-[92px]" fill="none" stroke="#40586a" strokeWidth="1.100">
        <path d="M3.500 2.500h10l2.500 6v5H1v-5zM1 9h15" />
        <circle cx="29.500" cy="8" r="6.300" />
        <circle cx="29.500" cy="8" r="1.700" fill="#40586a" />
        <path d="M44.500 2.500h8v5h-8zM49.500 6.500h8v5h-8z" />
        <path d="M44.500 9v5h10" strokeDasharray="1 1.200" />
        <path d="M66.500 0v16" stroke="#a0a0a0" />
        <path d="M76.500 1.500h13v9l-3.500 3.500h-9.500zM86 14v-3.500h3.500" />
        <g fill="#7ecb12" stroke="none">
          <circle cx="13.500" cy="12.500" r="2.600" />
          <circle cx="34.500" cy="12.500" r="2.600" />
          <circle cx="55.500" cy="12.500" r="2.600" />
        </g>
      </svg>
    </div>
  );
}

/* ---------- Windows taskbar ---------- */

function Slot({ w, bar, active, children }: { w: string; bar?: boolean; active?: boolean; children: React.ReactNode }) {
  return (
    <div className={`relative flex h-10 shrink-0 items-center justify-center ${w} ${active ? "bg-[#52666f]" : ""}`}>
      {children}
      {bar && <div className={`absolute bottom-0 h-0.5 bg-[#76b9ed] ${active ? "inset-x-0" : "inset-x-1"}`} />}
    </div>
  );
}

function Taskbar() {
  return (
    <div className="flex h-10 shrink-0 items-center bg-linear-to-r from-[#20373f] via-[#1c2f3e] to-[#182440] text-white">
      <Slot w="w-12">
        <svg viewBox="0 0 16 16" className="h-4 w-4" fill="#fff">
          <path d="M0 2.300L6.500 1.400v6.100H0zM7.300 1.300L16 0v7.500H7.300zM0 8.300h6.500v6.200L0 13.600zM7.300 8.300H16V16l-8.700-1.300z" />
        </svg>
      </Slot>
      <Slot w="w-[48px]">
        <svg viewBox="0 0 18 18" className="h-[18px] w-[18px]" fill="none" stroke="#fff" strokeWidth="1.400">
          <circle cx="11" cy="7" r="5.300" />
          <path d="M7 11l-6 6" />
        </svg>
      </Slot>
      <Slot w="w-[51px]"><FaEdgeLegacy className="h-[21px] w-[21px] text-[#0078d7]" /></Slot>
      <Slot w="w-[49px]" bar>
        <svg viewBox="0 0 24 20" className="h-5 w-6">
          <path d="M1 1h8l2 2h12v16H1z" fill="#e8a33d" />
          <path d="M1 4h22v15H1z" fill="#fbd674" />
          <path d="M5 19v-6q0-2 2-2h10q2 0 2 2v6h-4v-4H9v4z" fill="#3b99d8" />
        </svg>
      </Slot>
      <Slot w="w-[49px]" bar>
        <svg viewBox="0 0 24 24" className="h-[23px] w-[23px]">
          <circle cx="12" cy="12" r="11.500" fill="#fcc31e" />
          <path d="M12 12L2 6.200A11.500 11.500 0 0 1 22 6.300H12z" fill="#dd4b3e" />
          <path d="M12 12L2 6.200A11.500 11.500 0 0 0 11 23.500l5-8.500z" fill="#1aa15f" />
          <circle cx="12" cy="12" r="5.700" fill="#fff" />
          <circle cx="12" cy="12" r="4.500" fill="#4c8bf5" />
        </svg>
      </Slot>
      <Slot w="w-[49px]">
        <svg viewBox="0 0 24 24" className="h-[23px] w-[23px]" stroke="#222" strokeWidth=".7">
          <path d="M11 1h11v9H11zM12 11h11v3H12zM2 11h11v8H2zM1 20h14v3H1z" fill="#ccc" />
          <path d="M12.500 2.500h8v6h-8zM3.500 12.500h8v5.500h-8z" fill="#0a14c8" />
          <path d="M16 5L7 11l4 .5L6 17l10-7-4-.5z" fill="#fff200" />
        </svg>
      </Slot>
      <Slot w="w-[49px]">
        <svg viewBox="0 0 24 24" className="h-6 w-6">
          <path d="M17 0l6 2.500v19L17 24z" fill="#28a5ee" />
          <path d="M17 0v6.500L3 18 .5 16z" fill="#1387d3" />
          <path d="M17 24v-6.500L3 6 .5 8z" fill="#0b6fb8" />
          <path d="M17 6.500v11L10.500 12z" fill="#20373f" />
        </svg>
      </Slot>
      <Slot w="w-[49px]">
        <svg viewBox="0 0 24 24" className="h-[23px] w-[23px]">
          <circle cx="11" cy="12" r="11" fill="#f0932b" />
          <circle cx="13" cy="12" r="11" fill="#2c2255" />
          <path d="M2.500 9.500h21M2.500 12.200h21M2.500 15h21" stroke="#fff" strokeWidth="1.500" />
        </svg>
      </Slot>
      <Slot w="w-[49px]">
        <div className="flex h-6 w-6 items-center justify-center rounded-full border-2 border-[#dcc5e8] bg-[#7d3aa3]">
          <FaGithubAlt className="h-3.5 w-3.5" />
        </div>
      </Slot>
      <Slot w="w-[50px]">
        <svg viewBox="0 0 24 24" className="h-6 w-6">
          <path d="M17 0l6 2.500v19L17 24z" fill="#b57fea" />
          <path d="M17 0v7L4 19l-3.500-2V7L4 5l13 12v7L3.500 12.500z" fill="#7d42c0" />
          <path d="M3 9v6l3-3zM17 7.500v9L11.500 12z" fill="#20343f" />
        </svg>
      </Slot>
      <Slot w="w-[45px]" bar active><VmwareLogo className="ml-0.5 h-6 w-6" /></Slot>
      <div className="h-full w-[3px] bg-[#3d515b]" />
      <Slot w="w-[48px]" bar>
        <svg viewBox="0 0 24 24" className="h-[23px] w-[23px]">
          <path d="M8 1l13 2-3 19-16-3z" fill="#8fc9d4" />
          <path d="M8 1l13 2-.7 3L7 4z" fill="#e7eef0" />
          <path d="M21 4l1 15-4 3z" fill="#d7d0c0" />
          <path d="M9 6L3 18l7 1z" fill="#c9e8ed" opacity=".7" />
        </svg>
      </Slot>
      <Slot w="w-[49px]" bar>
        <svg viewBox="0 0 24 24" className="h-6 w-6">
          <path d="M10 5c6 0 11 3 11 9 0 5-3 9-7 9-3 0-2-4-5-4-3 1-8 0-8-5 0-5 4-9 9-9z" fill="#d8e8f3" />
          <circle cx="6" cy="12" r="1.800" fill="#e03c31" />
          <circle cx="10" cy="8.500" r="1.800" fill="#f5a623" />
          <circle cx="15" cy="9" r="1.800" fill="#4caf50" />
          <circle cx="6" cy="16" r="1.600" fill="#7b4fc0" />
          <circle cx="17" cy="15" r="1.800" fill="#2d8fe0" />
          <path d="M22 3L13 22" stroke="#c98a4b" strokeWidth="1.800" />
          <path d="M20 1l4 1-2 6-3-1z" fill="#e0a868" />
        </svg>
      </Slot>
      <div className="ml-auto flex h-full items-center">
        <svg viewBox="0 0 64 20" className="h-5 w-16" fill="none" stroke="#fff" strokeWidth="1.100">
          <path d="M2 13l6-6 6 6" />
          <path d="M26.500 5.500h13v8h-11M33 14v3M29 17.500h8M24.500 4.500h5v4h-5zM27 8.500v9" />
          <path d="M47.500 8.500h2.500l3.500-3.500v11L50 12.500h-2.500zM56.500 8l5 5M61.500 8l-5 5" />
        </svg>
        <span className="ml-2 w-[14px] text-[20px] leading-5">A</span>
        <div className="ml-[10px] flex w-[67px] flex-col items-center text-[12px] leading-[18px]">
          <T w={58}>오전 11:52</T>
          <T w={66}>2020-07-06</T>
        </div>
        <svg viewBox="0 0 16 17" className="ml-[19px] h-[17px] w-4">
          <path d="M0 1h16v12h-5l-3 3.500L5 13H0z" fill="#fff" />
          <path d="M3 4.500h10M3 7h10M3 9.500h6" stroke="#182440" />
        </svg>
        <div className="mr-1 ml-[20px] h-full w-px bg-[#5c6880]" />
      </div>
    </div>
  );
}

export default function App() {
  return (
    <div className={`flex h-[1080px] w-[1920px] flex-col overflow-hidden bg-[#e3e4e7] ${UI}`}>
      <TitleBar />
      <MenuBar />
      <div className="flex h-[963px] shrink-0">
        <Library />
        <div className="flex w-[1720px] shrink-0 flex-col">
          <div className="mt-px flex h-[908px] shrink-0 flex-col border border-[#696969]">
            <TabStrip />
            <div className="flex h-[857px] shrink-0">
              <GuestScreen />
              <div className="flex w-[17px] flex-col border-l border-white bg-[#f0f0f0]">
                <Chevron d="M4.500 10.500L8 7l3.500 3.500" />
                <div className="h-[761px] w-full bg-[#cdcdcd]" />
                <div className="mt-auto"><Chevron d="M4.500 5.500L8 9l3.500-3.500" /></div>
              </div>
            </div>
            <div className="flex flex-1 items-center border-t border-white bg-[#f0f0f0]">
              <Chevron d="M9.500 4.500L6 8l3.500 3.500" />
              <div className="ml-px h-full w-[1651px] bg-[#cdcdcd]" />
              <div className="mr-[17px] ml-auto"><Chevron d="M6.500 4.500L10 8l-3.500 3.500" /></div>
            </div>
          </div>
          <InstallHint />
        </div>
      </div>
      <StatusBar />
      <Taskbar />
    </div>
  );
}
